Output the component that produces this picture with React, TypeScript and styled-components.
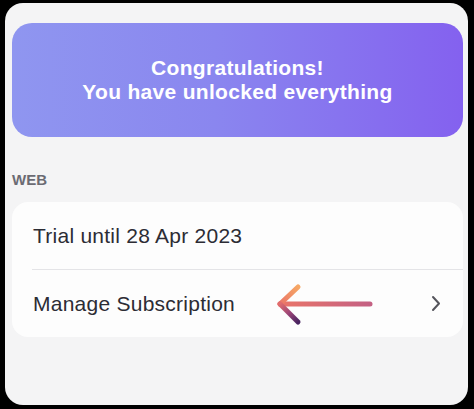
import React from "react";
import styled, { createGlobalStyle } from "styled-components";

const Global = createGlobalStyle`
  html, body { margin: 0; padding: 0; background: #000; }
  body { font-family: "Liberation Sans", Arial, sans-serif; }
`;

const Screen = styled.div`
  width: 474px;
  height: 409px;
  background: #000;
  padding: 3px 6px 4px 5px;
  box-sizing: border-box;
`;

const Panel = styled.div`
  height: 100%;
  background: #f4f4f5;
  border-radius: 18px;
  padding: 20px 5px 0 7px;
  box-sizing: border-box;
  display: flex;
  flex-direction: column;
`;

const Banner = styled.div`
  height: 114px;
  border-radius: 20px;
  background: linear-gradient(90deg, #8f96f0 0%, #8a86ef 45%, #8461ef 100%);
  display: flex;
  flex-direction: column;
  align-items: center;
  justify-content: center;
  color: #fff;
  font-weight: 700;
  font-size: 21px;
  line-height: 24px;
  letter-spacing: 0.3px;
  text-align: center;
`;

const SectionLabel = styled.div`
  margin: 34px 0 13px 0;
  font-size: 15px;
  line-height: 18px;
  font-weight: 700;
  color: #6b6b73;
`;

const Card = styled.div`
  background: #fdfdfd;
  border-radius: 16px;
  display: flex;
  flex-direction: column;
  position: relative;
`;

const Row = styled.div`
  height: 67px;
  display: flex;
  align-items: center;
  padding: 0 21px;
  font-size: 21px;
  letter-spacing: 0.25px;
  color: #2c2c34;
  position: relative;
`;

const RowText = styled.span`
  flex: 1;
`;

const Divider = styled.div`
  height: 1px;
  margin-left: 20px;
  background: #e4e4e7;
`;

const Chevron = styled.svg`
  width: 10px;
  height: 17px;
  margin-right: 1px;
`;

const Annotation = styled.svg`
  position: absolute;
  left: 263px;
  top: 13px;
  width: 100px;
  height: 44px;
`;

export default function App() {
  return (
    <>
      <Global />
      <Screen>
        <Panel>
          <Banner>
            <div>Congratulations!</div>
            <div>You have unlocked everything</div>
          </Banner>
          <SectionLabel>WEB</SectionLabel>
          <Card>
            <Row>
              <RowText>Trial until 28 Apr 2023</RowText>
            </Row>
            <Divider />
            <Row>
              <RowText>Manage Subscription</RowText>
              <Chevron viewBox="0 0 10 17" fill="none">
                <path d="M2 2 L8 8.5 L2 15" stroke="#55555c" strokeWidth="2" strokeLinecap="round" strokeLinejoin="round" />
              </Chevron>
              <Annotation viewBox="0 0 100 44" fill="none">
                <defs>
                  <linearGradient id="shaft" x1="5" y1="0" x2="95" y2="0" gradientUnits="userSpaceOnUse">
                    <stop offset="0" stopColor="#ea7468" />
                    <stop offset="1" stopColor="#c46183" />
                  </linearGradient>
                  <linearGradient id="up" x1="5" y1="21" x2="23" y2="4" gradientUnits="userSpaceOnUse">
                    <stop offset="0" stopColor="#ea7468" />
                    <stop offset="1" stopColor="#f6a765" />
                  </linearGradient>
                  <linearGradient id="down" x1="5" y1="21" x2="23" y2="39" gradientUnits="userSpaceOnUse">
                    <stop offset="0" stopColor="#e06c6e" />
                    <stop offset="0.5" stopColor="#9c4577" />
                    <stop offset="1" stopColor="#4a2460" />
                  </linearGradient>
                </defs>
                <path d="M5 21 L95 21" stroke="url(#shaft)" strokeWidth="5" strokeLinecap="round" />
                <path d="M23 4 L5 21" stroke="url(#up)" strokeWidth="5" strokeLinecap="round" />
                <path d="M5 21 L23 39" stroke="url(#down)" strokeWidth="5" strokeLinecap="round" />
              </Annotation>
            </Row>
          </Card>
        </Panel>
      </Screen>
    </>
  );
}
